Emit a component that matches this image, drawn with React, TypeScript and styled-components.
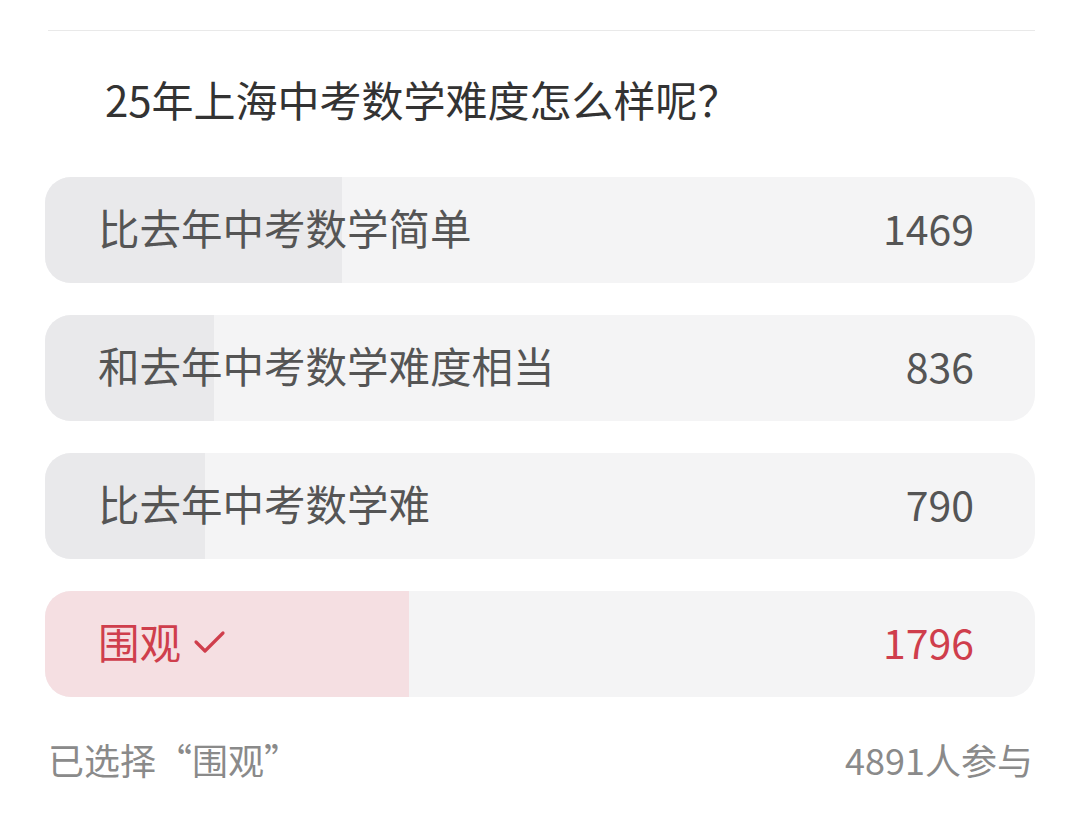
import React from 'react'
import styled, { createGlobalStyle } from 'styled-components'

type PollOption = {
  label: string
  count: number
  selected?: boolean
}

const options: PollOption[] = [
  { label: '比去年中考数学简单', count: 1469 },
  { label: '和去年中考数学难度相当', count: 836 },
  { label: '比去年中考数学难', count: 790 },
  { label: '围观', count: 1796, selected: true },
]

const total = 4891

const GlobalStyle = createGlobalStyle`
  body {
    margin: 0;
    background: #ffffff;
    font-family: "Noto Sans CJK SC", "Noto Sans", sans-serif;
  }
`

const Page = styled.div`
  width: 1080px;
  height: 820px;
  box-sizing: border-box;
  padding: 30px 45px 0 45px;
  overflow: hidden;
`

const Divider = styled.div`
  height: 1px;
  margin: 0 0 0 3px;
  background: #e9e9e9;
`

const Title = styled.h1`
  margin: 42px 0 0 60px;
  font-size: 42px;
  font-weight: 400;
  line-height: 52px;
  color: #333333;
`

const OptionList = styled.div`
  display: flex;
  flex-direction: column;
  gap: 32px;
  margin-top: 52px;
`

const Row = styled.div<{ $selected?: boolean }>`
  position: relative;
  height: 106px;
  box-sizing: border-box;
  border-radius: 26px;
  background: #f4f4f5;
  overflow: hidden;
  display: flex;
  align-items: center;
  justify-content: space-between;
  padding: 0 61px 5px 53px;
  color: ${(p) => (p.$selected ? '#cf3e4c' : '#555555')};
`

const Fill = styled.div<{ $selected?: boolean }>`
  position: absolute;
  left: 0;
  top: 0;
  bottom: 0;
  background: ${(p) => (p.$selected ? '#f5dfe2' : '#e9e9eb')};
`

const Label = styled.span`
  position: relative;
  display: flex;
  align-items: center;
  gap: 12px;
  font-size: 41.5px;
  line-height: 1;
`

const Count = styled.span`
  position: relative;
  font-size: 41px;
  line-height: 1;
`

const Footer = styled.div`
  display: flex;
  justify-content: space-between;
  align-items: center;
  margin-top: 42px;
  padding: 0 2px 0 3px;
  font-size: 36px;
  line-height: 40px;
  color: #8a8a8a;
`

const Check = () => (
  <svg width="34" height="30" viewBox="0 0 34 30" fill="none">
    <path d="M3 15 L12 24 L30 6" stroke="#cf3e4c" strokeWidth="3.2" strokeLinecap="round" strokeLinejoin="round" />
  </svg>
)

const App = () => {
  const chosen = options.find((o) => o.selected)

  return (
    <>
      <GlobalStyle />
      <Page>
        <Divider />
        <Title>25年上海中考数学难度怎么样呢？</Title>
        <OptionList>
          {options.map((o) => (
            <Row key={o.label} $selected={o.selected}>
              <Fill $selected={o.selected} style={{ width: `${(o.count / total) * 100}%` }} />
              <Label>
                {o.label}
                {o.selected && <Check />}
              </Label>
              <Count>{o.count}</Count>
            </Row>
          ))}
        </OptionList>
        <Footer>
          <span>已选择“{chosen?.label}”</span>
          <span>{total}人参与</span>
        </Footer>
      </Page>
    </>
  )
}

export default App
